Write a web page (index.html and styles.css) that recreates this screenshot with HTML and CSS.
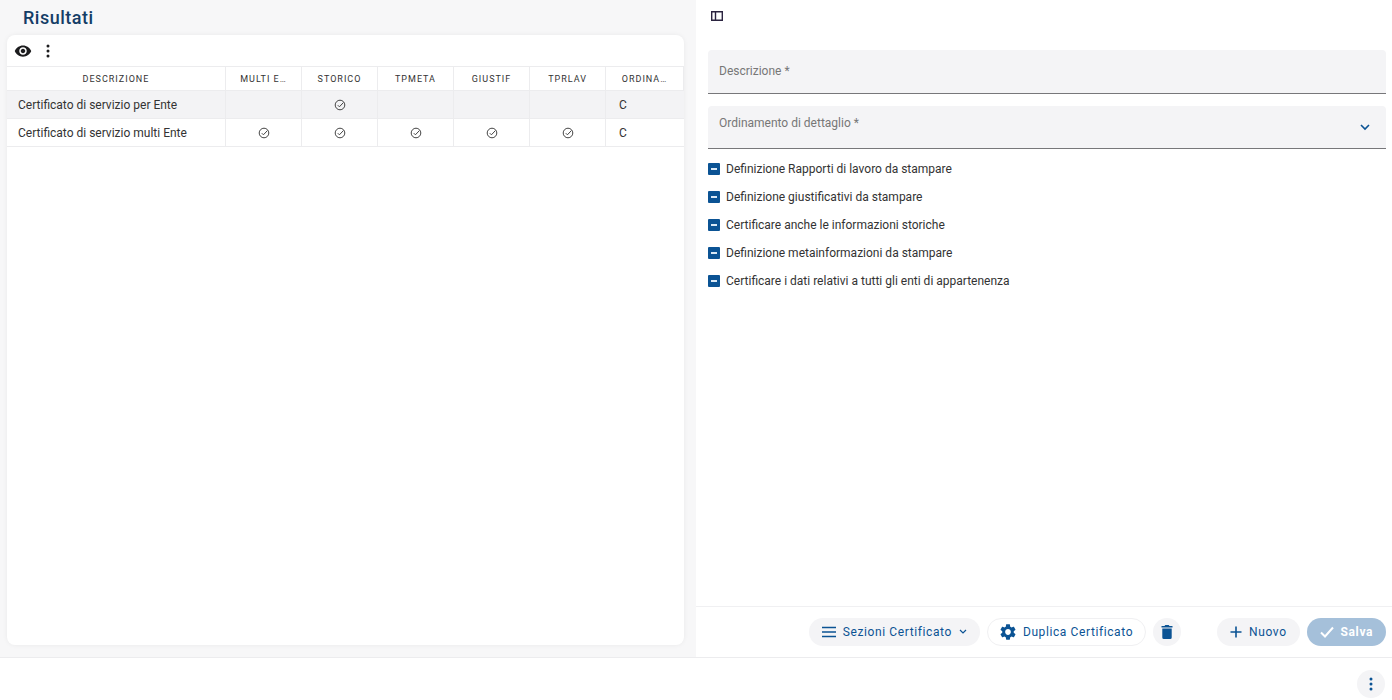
FILE: index.html
```html
<!DOCTYPE html>
<html lang="it">
<head>
<meta charset="utf-8">
<title>Risultati</title>
<link rel="stylesheet" href="styles.css">
</head>
<body>
<svg class="defs" aria-hidden="true">
  <symbol id="check-circle" viewBox="0 0 12 12"><circle cx="6" cy="6" r="4.8"/><path d="M3.8 6.2l1.6 1.6 4-4.2"/></symbol>
  <symbol id="dots" viewBox="0 0 14 14"><circle cx="7" cy="2" r="1.5"/><circle cx="7" cy="7" r="1.5"/><circle cx="7" cy="12" r="1.5"/></symbol>
</svg>
<main class="workspace">
  <section class="results">
    <h1 class="results-title">Risultati</h1>
    <div class="card">
      <div class="toolbar">
        <button class="icon-button" aria-label="Visualizza"><svg width="18" height="18" viewBox="0 0 24 24"><path d="M12 4.5C7 4.5 2.73 7.61 1 12c1.73 4.39 6 7.500 11 7.500s9.270-3.110 11-7.500c-1.730-4.390-6-7.500-11-7.500zM12 17c-2.760 0-5-2.240-5-5s2.240-5 5-5 5 2.240 5 5-2.240 5-5 5zm0-8c-1.660 0-3 1.340-3 3s1.340 3 3 3 3-1.340 3-3-1.340-3-3-3z"/></svg></button>
        <button class="icon-button" aria-label="Altro"><svg width="14" height="14"><use href="#dots"/></svg></button>
      </div>
      <table class="grid">
        <colgroup><col><col class="col-flag"><col class="col-flag"><col class="col-flag"><col class="col-flag"><col class="col-flag"><col class="col-last"></colgroup>
        <thead>
          <tr><th>DESCRIZIONE</th><th>MULTI E…</th><th>STORICO</th><th>TPMETA</th><th>GIUSTIF</th><th>TPRLAV</th><th>ORDINA…</th></tr>
        </thead>
        <tbody>
          <tr class="selected"><td class="text">Certificato di servizio per Ente</td><td></td><td><svg class="tick"><use href="#check-circle"/></svg></td><td></td><td></td><td></td><td class="text">C</td></tr>
          <tr><td class="text">Certificato di servizio multi Ente</td><td><svg class="tick"><use href="#check-circle"/></svg></td><td><svg class="tick"><use href="#check-circle"/></svg></td><td><svg class="tick"><use href="#check-circle"/></svg></td><td><svg class="tick"><use href="#check-circle"/></svg></td><td><svg class="tick"><use href="#check-circle"/></svg></td><td class="text">C</td></tr>
        </tbody>
      </table>
    </div>
  </section>
  <section class="detail">
    <form class="form">
      <button type="button" class="icon-button panel-toggle" aria-label="Mostra pannello"><svg width="12" height="10" viewBox="0 0 12 10"><path d="M.7.7h10.600v8.600H.7zM4.500.7v8.600"/></svg></button>
      <div class="field">
        <label for="descrizione">Descrizione *</label>
        <input id="descrizione" type="text">
      </div>
      <div class="field field-select">
        <label for="ordinamento">Ordinamento di dettaglio *</label>
        <select id="ordinamento"><option></option></select>
        <svg class="chevron" width="10" height="7" viewBox="0 0 10 7"><path d="M1 1l4 4 4-4"/></svg>
      </div>
      <div class="options">
        <label class="option"><input type="checkbox" checked>Definizione Rapporti di lavoro da stampare</label>
        <label class="option"><input type="checkbox" checked>Definizione giustificativi da stampare</label>
        <label class="option"><input type="checkbox" checked>Certificare anche le informazioni storiche</label>
        <label class="option"><input type="checkbox" checked>Definizione metainformazioni da stampare</label>
        <label class="option"><input type="checkbox" checked>Certificare i dati relativi a tutti gli enti di appartenenza</label>
      </div>
    </form>
    <div class="actions">
      <button class="pill"><svg class="line" width="14" height="12" viewBox="0 0 14 12"><path d="M0 1.500h14M0 6h14M0 10.500h14"/></svg>Sezioni Certificato<svg class="line thin" width="8" height="6" viewBox="0 0 8 6"><path d="M1 1l3 3 3-3"/></svg></button>
      <button class="pill pill-outline"><svg width="16" height="16" viewBox="2 2 20 20"><path d="M19.140 12.940c.04-.3.060-.61.060-.94 0-.32-.02-.64-.07-.94l2.030-1.580c.18-.14.230-.41.120-.61l-1.920-3.320c-.12-.22-.37-.29-.59-.22l-2.390.96c-.5-.38-1.030-.7-1.620-.94l-.36-2.540c-.04-.24-.24-.41-.48-.41h-3.840c-.24 0-.43.170-.47.410l-.36 2.540c-.59.240-1.130.57-1.620.94l-2.390-.96c-.22-.08-.47 0-.59.220L2.740 8.870c-.12.210-.08.470.12.610l2.030 1.580c-.05.3-.09.630-.09.94s.02.640.07.940l-2.030 1.580c-.18.140-.23.410-.12.610l1.920 3.320c.12.220.37.290.59.220l2.390-.96c.5.380 1.030.7 1.620.940l.36 2.540c.05.240.24.410.48.410h3.840c.24 0 .44-.17.47-.41l.36-2.540c.59-.24 1.130-.56 1.620-.94l2.390.96c.22.080.47 0 .59-.22l1.920-3.320c.12-.22.070-.47-.12-.61l-2.010-1.580zM12 15.600c-1.980 0-3.600-1.620-3.600-3.600s1.620-3.600 3.600-3.600 3.600 1.620 3.600 3.600-1.620 3.600-3.600 3.600z"/></svg>Duplica Certificato</button>
      <button class="pill round" aria-label="Elimina"><svg width="12" height="14" viewBox="0 0 12 14"><path d="M.5 1h3L4.300 0h3.400l.8 1h3v1.600H.5zM1.300 3.400h9.400V12.500q0 1.500-1.500 1.500H2.800q-1.500 0-1.500-1.500z"/></svg></button>
      <button class="pill pill-new"><svg class="line" width="12" height="12" viewBox="0 0 12 12"><path d="M6 .5v11M.5 6h11"/></svg>Nuovo</button>
      <button class="pill pill-save" disabled><svg class="line" width="14" height="12" viewBox="0 0 14 12"><path d="M1 6.500l4 4L13 1.500"/></svg>Salva</button>
    </div>
  </section>
</main>
<footer class="footer">
  <button class="pill round" aria-label="Altre azioni"><svg width="14" height="14"><use href="#dots"/></svg></button>
</footer>
</body>
</html>
```
FILE: styles.css
```css
* { box-sizing: border-box; }

body {
  margin: 0;
  min-height: 100vh;
  display: flex;
  flex-direction: column;
  font: 12px/16px Roboto, "Liberation Sans", sans-serif;
  color: #333;
  background: #fff;
}

button, input, select { font: inherit; color: inherit; }
svg { flex: none; fill: currentColor; }
.defs { display: none; }

.workspace {
  flex: 1;
  display: grid;
  grid-template-columns: 1fr 1fr;
}

.results {
  display: flex;
  flex-direction: column;
  padding: 6px 12px 12px 7px;
  background: #f7f7f8;
}

.results-title {
  margin: 0 0 5px 16px;
  font-size: 18px;
  line-height: 24px;
  font-weight: 500;
  letter-spacing: 0.5px;
  color: #143d66;
}

.card {
  flex: 1;
  overflow: hidden;
  background: #fff;
  border-radius: 8px;
  box-shadow: 0 0 5px rgba(0, 0, 0, 0.06);
}

.toolbar {
  display: flex;
  align-items: center;
  gap: 9px;
  height: 31px;
  padding: 0 7px;
}

.icon-button {
  display: flex;
  padding: 0;
  border: 0;
  background: none;
  color: #1c1c1e;
}

.grid {
  width: 100%;
  table-layout: fixed;
  border-collapse: separate;
  border-spacing: 0;
  border-top: 1px solid #ececee;
}

.col-flag, .col-last { width: 76px; }
.col-last { width: 78px; }

.grid th, .grid td {
  padding: 0;
  border-right: 1px solid #ececee;
  border-bottom: 1px solid #ececee;
  text-align: center;
  white-space: nowrap;
}

.grid th {
  height: 24px;
  font-size: 9px;
  font-weight: 400;
  letter-spacing: 1px;
}

.grid td { height: 28px; }
.grid td:last-child { border-right: 0; }
.grid .text { padding-left: 11px; text-align: left; }
.grid .text:last-child { padding-left: 13px; }
.selected { background: #f3f3f5; }

.tick {
  display: block;
  width: 12px;
  height: 12px;
  margin: 0 auto;
  fill: none;
  stroke: #444;
}

.detail {
  display: flex;
  flex-direction: column;
}

.form {
  flex: 1;
  display: flex;
  flex-direction: column;
  gap: 12px;
  padding: 11px 6px 0 12px;
}

.panel-toggle {
  align-self: flex-start;
  margin-bottom: 17px;
  padding: 0 3px;
}

.panel-toggle svg, .chevron, .line {
  fill: none;
  stroke: #2b2440;
  stroke-width: 1.4;
}

.field {
  display: grid;
  align-items: center;
  height: 44px;
  background: #f4f4f6;
  border-bottom: 1px solid #77777a;
  border-radius: 4px 4px 0 0;
  color: #777;
}

.field > * { grid-area: 1 / 1; }
.field label { padding: 0 11px 2px; }

.field input, .field select {
  width: 100%;
  height: 100%;
  padding: 0 11px;
  border: 0;
  outline: 0;
  appearance: none;
  background: none;
}

.field-select { height: 43px; }
.field-select label { padding-bottom: 8px; }
.chevron { justify-self: end; margin-right: 16px; }
.chevron, .pill .line { stroke: #0b5394; stroke-width: 1.6; }

.options {
  display: flex;
  flex-direction: column;
  gap: 12px;
}

.option {
  display: flex;
  align-items: center;
  gap: 6px;
}

.option input {
  display: grid;
  place-items: center;
  width: 12px;
  height: 12px;
  margin: 0;
  appearance: none;
  border-radius: 1px;
  background: #0b5394;
}

.option input::before {
  content: "";
  width: 6px;
  height: 2px;
  background: #dbe9f5;
}

.actions {
  display: flex;
  justify-content: flex-end;
  gap: 7px;
  padding: 11px 6px;
  border-top: 1px solid #f0f0f2;
}

.pill {
  display: flex;
  align-items: center;
  gap: 7px;
  height: 28px;
  padding: 0 13px;
  border: 0;
  border-radius: 14px;
  background: #f4f4f6;
  color: #0b5394;
  font-size: 12px;
  letter-spacing: 0.6px;
}

.pill-outline { background: #fff; border: 1px solid #f0f0f2; padding: 0 12px; }
.round { width: 28px; padding: 0; justify-content: center; }
.pill-new { margin-left: 29px; }
.pill-save { background: #a5c0da; color: #fff; font-weight: 700; }
.pill .thin { stroke-width: 1.2; }
.pill-save .line { stroke: #fff; stroke-width: 2; }

.footer {
  display: flex;
  justify-content: flex-end;
  padding: 12px 7px 2px;
  border-top: 1px solid #ececee;
}
```
